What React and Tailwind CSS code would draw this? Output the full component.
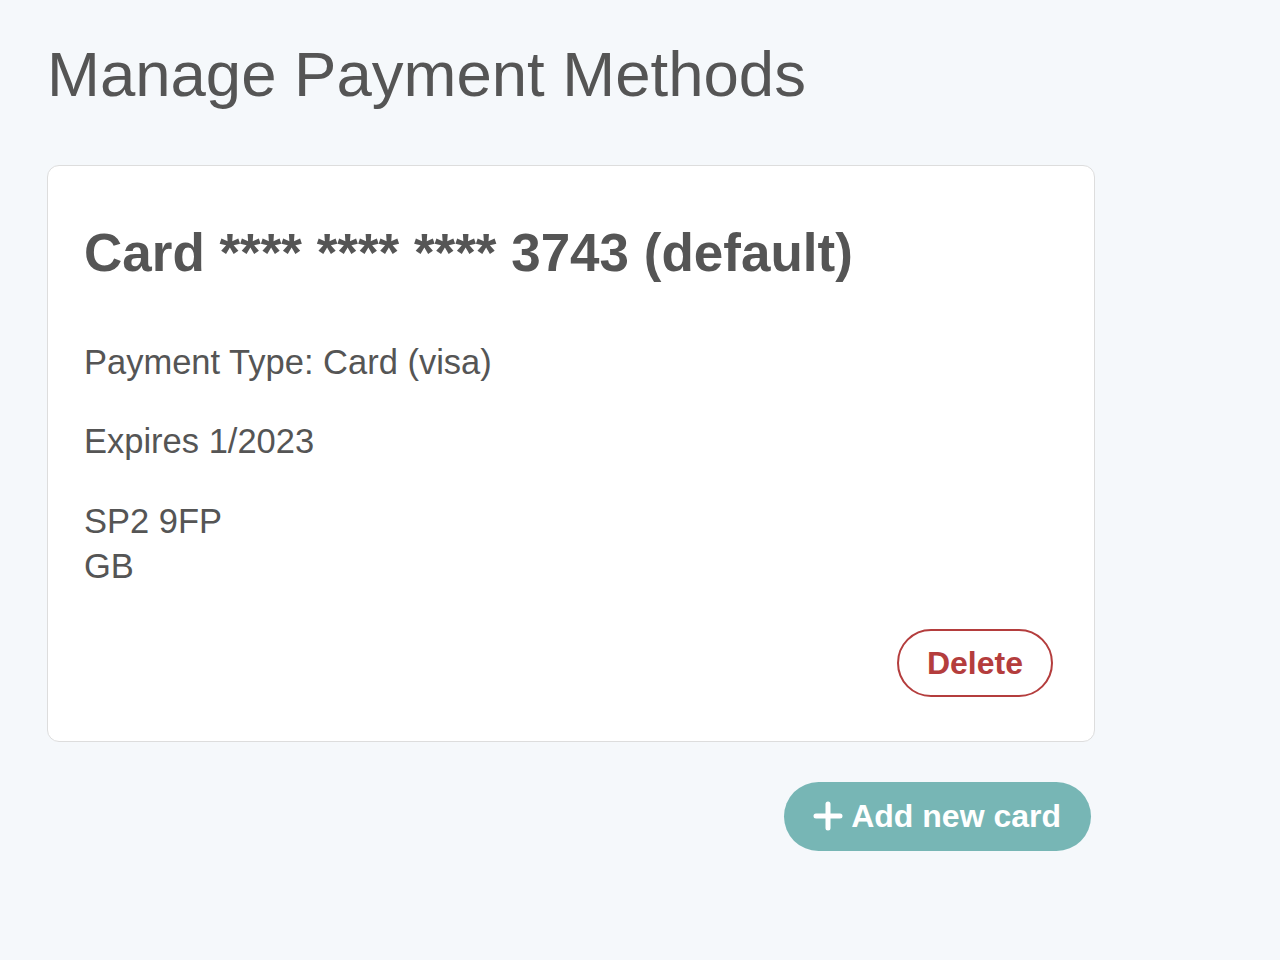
import React from "react";

const PlusIcon = () => (
  <svg width="30" height="30" viewBox="0 0 30 30" fill="none" aria-hidden="true">
    <path d="M15 3v24M3 15h24" stroke="currentColor" strokeWidth="5" strokeLinecap="round" />
  </svg>
);

const PaymentCard = ({ last4, brand, expiry, postcode, country, isDefault }) => (
  <div className="bg-white border border-[#dddddd] rounded-[12px] pl-[36px] pr-[41px] pt-[55px] pb-[44px]">
    <h2 className="text-[53px] font-bold leading-[1.2]">
      Card **** **** **** {last4}
      {isDefault ? " (default)" : ""}
    </h2>
    <p className="mt-[55px] text-[34.5px] leading-[45px]">Payment Type: Card ({brand})</p>
    <p className="mt-[34px] text-[34.5px] leading-[45px]">Expires {expiry}</p>
    <p className="mt-[35px] text-[34.5px] leading-[45px]">
      {postcode}
      <br />
      {country}
    </p>
    <div className="mt-[40px] flex justify-end">
      <button className="h-[68px] px-[28px] rounded-full border-2 border-[#b43d3d] text-[#b43d3d] text-[32px] font-bold">
        Delete
      </button>
    </div>
  </div>
);

export default function App() {
  return (
    <div
      className="min-h-screen bg-[#f5f8fb] text-[#555555]"
      style={{ fontFamily: '"Liberation Sans", Arial, sans-serif' }}
    >
      <div className="w-[1048px] ml-[47px] pt-[36px]">
        <h1 className="text-[63.5px] leading-[1.2] font-normal">Manage Payment Methods</h1>
        <div className="mt-[53px]">
          <PaymentCard
            last4="3743"
            brand="visa"
            expiry="1/2023"
            postcode="SP2 9FP"
            country="GB"
            isDefault
          />
        </div>
        <div className="mt-[40px] flex justify-end pr-[4px]">
          <button className="h-[69px] pl-[29px] pr-[30px] rounded-full bg-[#77b6b5] text-white text-[32px] font-bold flex items-center gap-[8px]">
            <PlusIcon />
            Add new card
          </button>
        </div>
      </div>
    </div>
  );
}
